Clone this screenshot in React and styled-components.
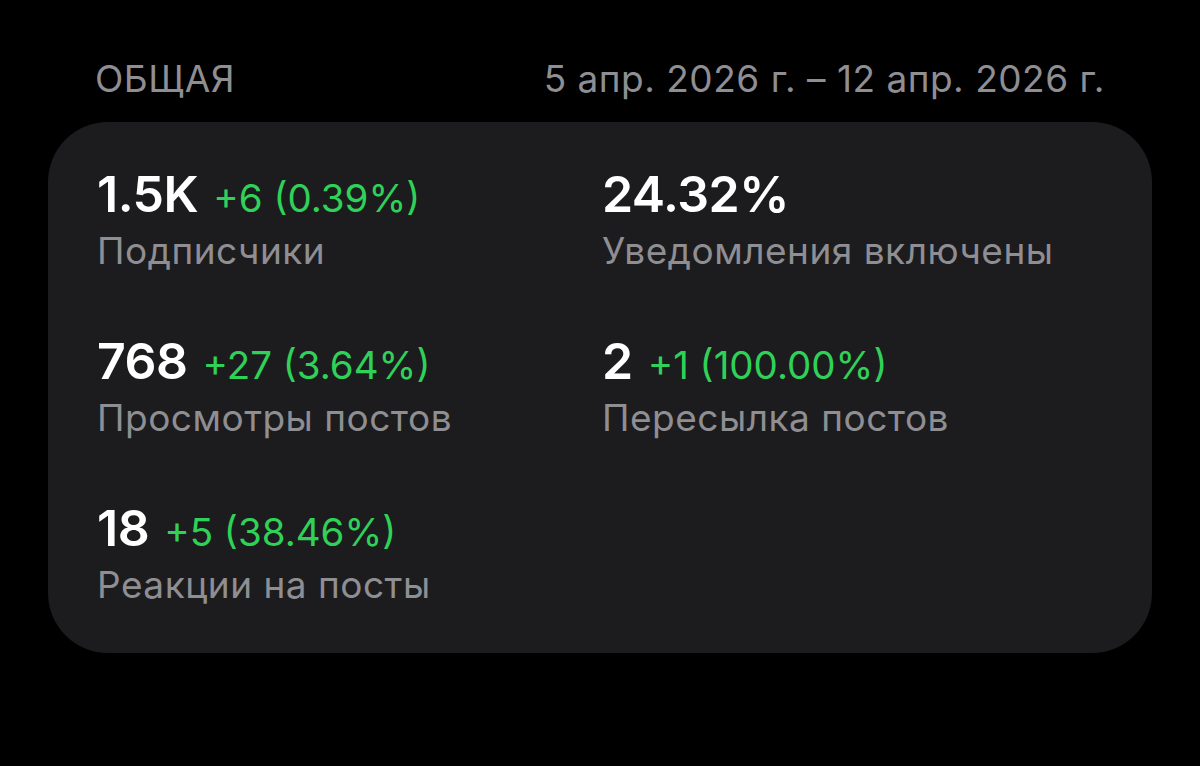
import React from "react";
import styled, { createGlobalStyle } from "styled-components";

const GlobalStyle = createGlobalStyle`
  html, body {
    margin: 0;
    padding: 0;
    background: #000;
  }
  body {
    font-family: Inter, "Noto Sans", "Liberation Sans", sans-serif;
    -webkit-font-smoothing: antialiased;
  }
`;

const Page = styled.div`
  width: 1200px;
  height: 766px;
  background: #000;
  padding: 57px 48px 0;
  box-sizing: border-box;
`;

const Header = styled.div`
  display: flex;
  justify-content: space-between;
  align-items: baseline;
  padding: 0 47px;
  height: 44px;
  font-size: 37px;
  line-height: 44px;
  letter-spacing: 0.5px;
  color: #8e8e93;
  white-space: nowrap;
`;

const Card = styled.div`
  margin-top: 21px;
  background: #1c1c1e;
  border-radius: 60px;
  padding: 44px 49px 46px;
  display: grid;
  grid-template-columns: 505px 1fr;
  row-gap: 60px;
`;

const Stat = styled.div`
  display: flex;
  flex-direction: column;
`;

const ValueLine = styled.div`
  height: 56px;
  line-height: 56px;
  white-space: nowrap;
`;

const Value = styled.span`
  font-size: 50px;
  font-weight: 600;
  color: #fff;
  letter-spacing: -0.5px;
`;

const Delta = styled.span`
  margin-left: 15px;
  font-size: 38.5px;
  font-weight: 400;
  color: #30d158;
`;

const Label = styled.div`
  margin-top: 7px;
  font-size: 37px;
  line-height: 44px;
  letter-spacing: 0.5px;
  color: #8e8e93;
  white-space: nowrap;
`;

const stats = [
  { value: "1.5K", delta: "+6 (0.39%)", label: "Подписчики" },
  { value: "24.32%", label: "Уведомления включены" },
  { value: "768", delta: "+27 (3.64%)", label: "Просмотры постов" },
  { value: "2", delta: "+1 (100.00%)", label: "Пересылка постов" },
  { value: "18", delta: "+5 (38.46%)", label: "Реакции на посты" },
];

const App = () => {
  return (
    <>
      <GlobalStyle />
      <Page>
        <Header>
          <span>ОБЩАЯ</span>
          <span>5 апр. 2026 г. – 12 апр. 2026 г.</span>
        </Header>
        <Card>
          {stats.map((s) => (
            <Stat key={s.label}>
              <ValueLine>
                <Value>{s.value}</Value>
                {s.delta && <Delta>{s.delta}</Delta>}
              </ValueLine>
              <Label>{s.label}</Label>
            </Stat>
          ))}
        </Card>
      </Page>
    </>
  );
};

export default App;
